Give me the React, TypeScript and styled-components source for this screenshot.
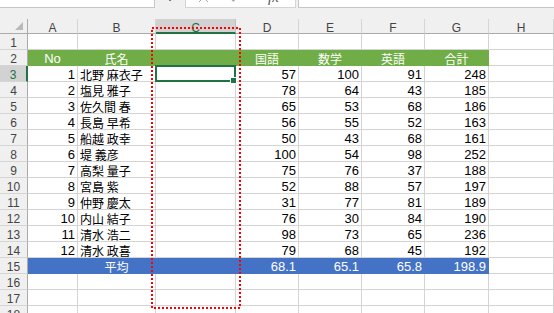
import React from 'react';
import styled, { createGlobalStyle } from 'styled-components';
import { X, Check } from 'lucide-react';

const GREEN = '#70ad47';
const BLUE = '#4472c4';
const XL = '#217346';
const GRID = '#d4d4d4';
const HEAD_BG = '#f0f0f0';
const HEAD_LINE = '#ababab';

const GlobalStyle = createGlobalStyle`
    html, body {
        margin: 0;
        padding: 0;
        background: #fff;
    }
    body {
        font-family: 'Liberation Sans', 'Noto Sans CJK JP', sans-serif;
    }
`;

const Page = styled.div`
    position: relative;
    width: 554px;
    height: 313px;
    overflow: hidden;
    background: ${HEAD_BG};
`;

const FormulaBar = styled.div`
    display: flex;
    align-items: flex-end;
    height: 8px;
    overflow: hidden;
`;

const NameBox = styled.div`
    flex: 0 0 155px;
    box-sizing: border-box;
    height: 22px;
    padding-left: 10px;
    background: #fff;
    border-right: 1px solid #c6c6c6;
    border-bottom: 1px solid #c6c6c6;
    font-size: 11px;
    line-height: 20px;
    color: #222;
`;

const Grip = styled.div`
    flex: 0 0 30px;
    height: 22px;
    text-align: center;
    font-size: 14px;
    line-height: 18px;
    color: #555;
`;

const FxBox = styled.div`
    flex: 0 0 111px;
    box-sizing: border-box;
    display: flex;
    align-items: center;
    height: 22px;
    padding-left: 9px;
    background: #fff;
    border: 1px solid #d4d4d4;
    color: #a8a8a8;
`;

const FxIcon = styled.span<{ $gap: number }>`
    display: flex;
    margin-left: ${({ $gap }) => `${$gap}px`};
`;

const FxLabel = styled.span`
    margin-left: 24px;
    font-family: 'Liberation Serif', serif;
    font-style: italic;
    font-size: 15px;
    color: #555;
`;

const FormulaInput = styled.div`
    flex: 1;
    box-sizing: border-box;
    height: 22px;
    margin-left: 2px;
    background: #fff;
    border-left: 1px solid #c6c6c6;
    border-bottom: 1px solid #c6c6c6;
`;

const Gap = styled.div`
    height: 11px;
`;

const Sheet = styled.div`
    display: grid;
    grid-template-columns: 28px 50px 78px 80px 63px 63px 63px 64px 1fr;
    grid-template-rows: 15px;
    grid-auto-rows: 16px;
    background: #fff;
`;

const Corner = styled.div`
    box-sizing: border-box;
    display: flex;
    justify-content: flex-end;
    align-items: flex-end;
    padding: 0 4px 3px 0;
    background: ${HEAD_BG};
    border-right: 1px solid ${HEAD_LINE};
    border-bottom: 1px solid ${HEAD_LINE};

    &::after {
        content: '';
        width: 0;
        height: 0;
        border-left: 8px solid transparent;
        border-bottom: 8px solid #b9b9b9;
    }
`;

const ColHead = styled.div<{ $selected?: boolean }>`
    box-sizing: border-box;
    padding-top: 3px;
    background: ${({ $selected }) => ($selected ? '#d2d2d2' : HEAD_BG)};
    color: ${({ $selected }) => ($selected ? XL : '#444')};
    border-right: 1px solid ${({ $selected }) => ($selected ? '#c0c0c0' : '#d5d5d5')};
    border-bottom: ${({ $selected }) => ($selected ? `2px solid ${XL}` : `1px solid ${HEAD_LINE}`)};
    font-size: 12px;
    line-height: 12px;
    text-align: center;
`;

const RowHead = styled.div<{ $selected?: boolean }>`
    box-sizing: border-box;
    padding-top: 3px;
    background: ${({ $selected }) => ($selected ? '#d2d2d2' : HEAD_BG)};
    color: ${({ $selected }) => ($selected ? XL : '#444')};
    border-right: ${({ $selected }) => ($selected ? `2px solid ${XL}` : `1px solid ${HEAD_LINE}`)};
    border-bottom: 1px solid #d5d5d5;
    font-size: 12px;
    line-height: 12px;
    text-align: center;
`;

type CellProps = {
    $fill?: string;
    $align?: 'left' | 'center' | 'right';
    $jp?: boolean;
};

const justify = { left: 'flex-start', center: 'center', right: 'flex-end' };

const Cell = styled.div<CellProps>`
    position: relative;
    box-sizing: border-box;
    display: flex;
    align-items: flex-end;
    justify-content: ${({ $align = 'left' }) => justify[$align]};
    padding: 0 2px 0 2px;
    background: ${({ $fill }) => $fill ?? '#fff'};
    color: ${({ $fill }) => ($fill ? '#fff' : '#000')};
    border-right: 1px solid ${({ $fill }) => $fill ?? GRID};
    border-bottom: 1px solid ${({ $fill }) => $fill ?? GRID};
    font-family: ${({ $jp }) =>
        $jp ? "'Noto Sans CJK JP', 'Liberation Sans', sans-serif" : "'Liberation Sans', 'Noto Sans CJK JP', sans-serif"};
    font-size: ${({ $jp }) => ($jp ? '12px' : '13px')};
    line-height: 12px;
    white-space: nowrap;
`;

const Selection = styled.div`
    position: absolute;
    top: -1px;
    left: -1px;
    right: -1px;
    bottom: -1px;
    border: 2px solid ${XL};
    z-index: 2;
`;

const FillHandle = styled.div`
    position: absolute;
    right: -2px;
    bottom: -3px;
    width: 5px;
    height: 5px;
    background: ${XL};
    box-shadow: 0 0 0 1px #fff;
    z-index: 3;
`;

const Marquee = styled.svg`
    position: absolute;
    left: 151px;
    top: 27px;
    z-index: 5;
`;

type Score = [number, string, number, number, number, number];

const scores: Score[] = [
    [1, '北野 麻衣子', 57, 100, 91, 248],
    [2, '塩見 雅子', 78, 64, 43, 185],
    [3, '佐久間 春', 65, 53, 68, 186],
    [4, '長島 早希', 56, 55, 52, 163],
    [5, '船越 政幸', 50, 43, 68, 161],
    [6, '堤 義彦', 100, 54, 98, 252],
    [7, '高梨 量子', 75, 76, 37, 188],
    [8, '宮島 紫', 52, 88, 57, 197],
    [9, '仲野 慶太', 31, 77, 81, 189],
    [10, '内山 結子', 76, 30, 84, 190],
    [11, '清水 浩二', 98, 73, 65, 236],
    [12, '清水 政喜', 79, 68, 45, 192],
];

const subjects = ['国語', '数学', '英語', '合計'];
const averages = ['68.1', '65.1', '65.8', '198.9'];
const letters = ['A', 'B', 'C', 'D', 'E', 'F', 'G', 'H'];

function EmptyRow({ row }: { row: number }) {
    return (
        <>
            <RowHead>{row}</RowHead>
            {letters.map((l) => (
                <Cell key={l} />
            ))}
        </>
    );
}

function App() {
    return (
        <Page>
            <GlobalStyle />
            <FormulaBar>
                <NameBox>C3</NameBox>
                <Grip>⋮</Grip>
                <FxBox>
                    <FxIcon $gap={0}>
                        <X size={17} strokeWidth={1.4} />
                    </FxIcon>
                    <FxIcon $gap={15}>
                        <Check size={17} strokeWidth={1.6} />
                    </FxIcon>
                    <FxLabel>fx</FxLabel>
                </FxBox>
                <FormulaInput />
            </FormulaBar>
            <Gap />
            <Sheet>
                <Corner />
                {letters.map((l) => (
                    <ColHead key={l} $selected={l === 'C'}>
                        {l}
                    </ColHead>
                ))}

                <EmptyRow row={1} />

                <RowHead>2</RowHead>
                <Cell $fill={GREEN} $align="center">No</Cell>
                <Cell $fill={GREEN} $align="center" $jp>氏名</Cell>
                <Cell $fill={GREEN} />
                {subjects.map((s) => (
                    <Cell key={s} $fill={GREEN} $align="center" $jp>
                        {s}
                    </Cell>
                ))}
                <Cell />

                {scores.map(([no, name, ja, math, en, total], i) => (
                    <React.Fragment key={no}>
                        <RowHead $selected={i === 0}>{i + 3}</RowHead>
                        <Cell $align="right">{no}</Cell>
                        <Cell $jp>{name}</Cell>
                        <Cell>
                            {i === 0 && (
                                <Selection>
                                    <FillHandle />
                                </Selection>
                            )}
                        </Cell>
                        <Cell $align="right">{ja}</Cell>
                        <Cell $align="right">{math}</Cell>
                        <Cell $align="right">{en}</Cell>
                        <Cell $align="right">{total}</Cell>
                        <Cell />
                    </React.Fragment>
                ))}

                <RowHead>15</RowHead>
                <Cell $fill={BLUE} />
                <Cell $fill={BLUE} $align="center" $jp>平均</Cell>
                <Cell $fill={BLUE} />
                {averages.map((a) => (
                    <Cell key={a} $fill={BLUE} $align="right">
                        {a}
                    </Cell>
                ))}
                <Cell />

                <EmptyRow row={16} />
                <EmptyRow row={17} />
                <EmptyRow row={18} />
            </Sheet>
            <Marquee width={90} height={282}>
                <rect x={1} y={1} width={88} height={280} fill="none" stroke="#ff0000" strokeWidth={2} strokeDasharray="2 2" />
            </Marquee>
        </Page>
    );
}

export default App;
